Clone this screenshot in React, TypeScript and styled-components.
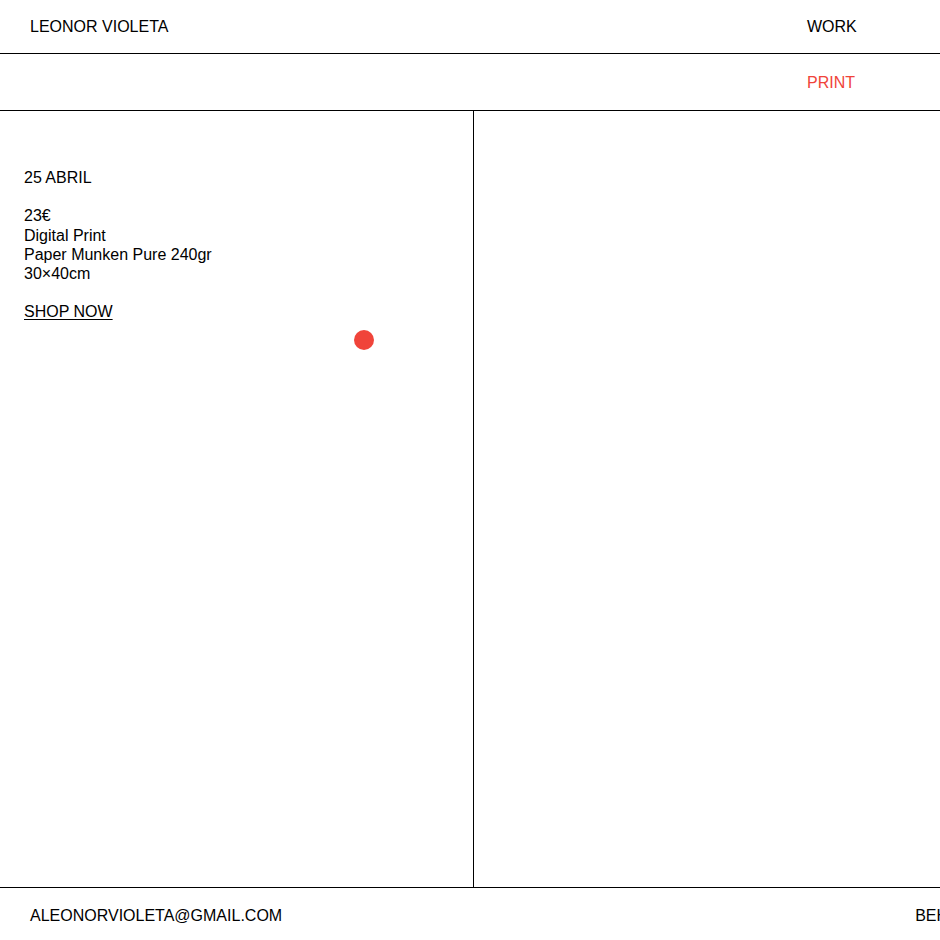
import React from "react";
import styled, { createGlobalStyle } from "styled-components";

const Global = createGlobalStyle`
  html, body { margin: 0; padding: 0; overflow: hidden; background: #fff; }
  body { font-family: "Liberation Sans", Arial, sans-serif; font-size: 16px; color: #000; }
  * { box-sizing: border-box; }
`;

const Page = styled.div`
  width: 940px;
  display: flex;
  flex-direction: column;
  overflow: hidden;
`;

const Row = styled.div<{ $h: number; $pt?: number }>`
  height: ${(p) => p.$h}px;
  flex: none;
  display: flex;
  align-items: center;
  border-bottom: 1px solid #000;
  padding-left: 30px;
  padding-top: ${(p) => p.$pt ?? 0}px;
`;

const Name = styled.span`
  flex: 1;
`;

const NavLink = styled.a<{ $active?: boolean }>`
  width: 133px;
  flex: none;
  color: ${(p) => (p.$active ? "#f0443a" : "#000")};
  text-decoration: none;
  margin-left: auto;
`;

const Main = styled.main`
  height: 777px;
  flex: none;
  display: grid;
  grid-template-columns: 474px 1fr;
  border-bottom: 1px solid #000;
`;

const LeftCol = styled.section`
  position: relative;
  border-right: 1px solid #000;
  padding: 57px 24px;
  line-height: 1.2;
`;

const Para = styled.p`
  margin: 0 0 1.2em;
`;

const Shop = styled.a`
  color: #000;
  text-decoration: underline;
  text-underline-offset: 2px;
`;

const Dot = styled.span`
  position: absolute;
  left: 354px;
  top: 219px;
  width: 20px;
  height: 20px;
  border-radius: 50%;
  background: #f0443a;
`;

const Footer = styled.footer`
  height: 56px;
  flex: none;
  display: flex;
  align-items: center;
  padding-left: 30px;
  white-space: nowrap;
`;

const FooterLink = styled.span`
  flex: none;
`;

const Spacer = styled.span`
  width: 633px;
  flex: none;
`;

export default function App() {
  return (
    <>
      <Global />
      <Page>
        <Row $h={54}>
          <Name>LEONOR VIOLETA</Name>
          <NavLink>WORK</NavLink>
        </Row>
        <Row $h={57} $pt={1}>
          <NavLink $active>PRINT</NavLink>
        </Row>
        <Main>
          <LeftCol>
            <Para>25 ABRIL</Para>
            <Para>
              23€
              <br />
              Digital Print
              <br />
              Paper Munken Pure 240gr
              <br />
              30×40cm
            </Para>
            <Para>
              <Shop href="#">SHOP NOW</Shop>
            </Para>
            <Dot />
          </LeftCol>
          <div />
        </Main>
        <Footer>
          <FooterLink>ALEONORVIOLETA@GMAIL.COM</FooterLink>
          <Spacer />
          <FooterLink>BEHANCE</FooterLink>
        </Footer>
      </Page>
    </>
  );
}
